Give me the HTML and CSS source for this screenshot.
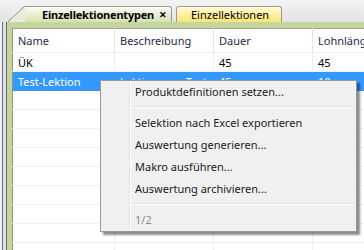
FILE: index.html
```html
<!DOCTYPE html>
<html lang="de">
<head>
    <meta charset="UTF-8">
    <meta name="viewport" content="width=device-width, initial-scale=1.0">
    <title>Einzellektionentypen</title>
    <link rel="stylesheet" href="styles.css">
</head>
<body>
    <div id="window">
        <div id="tabstrip">
            <div class="tab tab-active">
                <span class="tab-label">Einzellektionentypen</span>
                <span class="tab-close">&#x2715;</span>
            </div>
            <div class="tab tab-yellow">
                <span class="tab-label">Einzellektionen</span>
            </div>
        </div>
        <div id="body">
            <div id="chrome-left"></div>
            <div id="frame">
                <table id="grid">
                    <colgroup>
                        <col class="col-name">
                        <col class="col-desc">
                        <col class="col-dauer">
                        <col class="col-lohn">
                    </colgroup>
                    <thead>
                        <tr>
                            <th>Name</th>
                            <th>Beschreibung</th>
                            <th>Dauer</th>
                            <th>Lohnlänge</th>
                        </tr>
                    </thead>
                    <tbody>
                        <tr>
                            <td>ÜK</td>
                            <td></td>
                            <td>45</td>
                            <td>45</td>
                        </tr>
                        <tr class="selected">
                            <td>Test-Lektion</td>
                            <td>Lektion zum Test</td>
                            <td>45</td>
                            <td>10</td>
                        </tr>
                        <tr><td></td><td></td><td></td><td></td></tr>
                        <tr><td></td><td></td><td></td><td></td></tr>
                        <tr><td></td><td></td><td></td><td></td></tr>
                        <tr><td></td><td></td><td></td><td></td></tr>
                        <tr><td></td><td></td><td></td><td></td></tr>
                        <tr><td></td><td></td><td></td><td></td></tr>
                        <tr><td></td><td></td><td></td><td></td></tr>
                        <tr><td></td><td></td><td></td><td></td></tr>
                        <tr><td></td><td></td><td></td><td></td></tr>
                        <tr><td></td><td></td><td></td><td></td></tr>
                    </tbody>
                </table>
            </div>
        </div>

        <!-- context menu over the grid -->
        <div id="menu">
            <div class="menu-item">Produktdefinitionen setzen...</div>
            <div class="menu-sep"></div>
            <div class="menu-item">Selektion nach Excel exportieren</div>
            <div class="menu-item">Auswertung generieren...</div>
            <div class="menu-item">Makro ausführen...</div>
            <div class="menu-item">Auswertung archivieren...</div>
            <div class="menu-sep"></div>
            <div class="menu-item disabled">1/2</div>
        </div>
    </div>
</body>
</html>
```

FILE: styles.css
```css
body {
    margin: 0;
    padding: 0;
    font-family: 'Noto Sans', 'Open Sans', sans-serif;
    font-size: 11px;
    background-color: #ececec;
}

#window {
    position: relative;
    width: 364px;
    height: 250px;
    overflow: hidden;
}

#tabstrip {
    display: flex;
    align-items: flex-end;
    height: 22px;
    padding-left: 25px;
    background: linear-gradient(#f3f3f3, #e3e3e3);
}

.tab {
    position: relative;
    display: flex;
    align-items: center;
    box-sizing: border-box;
    height: 16px;
    border: 1px solid #9a9a9a;
    border-bottom: none;
    border-radius: 0 3px 0 0;
    color: #000;
}

.tab-active {
    width: 147px;
    padding-left: 17px;
    background: linear-gradient(#fafcf5, #d3e2b3);
    border-left: none;
}

.tab-active::before {
    content: '';
    position: absolute;
    left: -17px;
    top: -1px;
    width: 17px;
    height: 16px;
    background: linear-gradient(to top left, #e6eedb calc(50% - 0.5px), #8e8e8e 50%, transparent calc(50% + 1px));
}

.tab-active .tab-label {
    font-weight: bold;
    letter-spacing: -0.2px;
}

.tab-close {
    margin-left: auto;
    margin-right: 4px;
    font-size: 9px;
    font-weight: bold;
}

.tab-yellow {
    width: 106px;
    margin-left: 4px;
    padding-left: 14px;
    background: linear-gradient(#fffbd6, #fbe571);
    border-radius: 3px 3px 0 0;
}

#body {
    display: flex;
    height: 228px;
}

#chrome-left {
    width: 4px;
    flex: none;
    background-color: #dcdfe8;
    border-left: 2px solid #eef0f4;
    box-shadow: inset 1px 0 0 #6e6e6e, inset -1px 0 0 #6a6a6a;
    padding-left: 1px;
}

#frame {
    flex: 1;
    border-top: 6px solid #c4d69e;
    border-left: 5px solid #c4d69e;
    overflow: hidden;
    background-color: #fff;
}

#grid {
    border-collapse: collapse;
    table-layout: fixed;
    width: 400px;
    border-top: 1px solid #9aa38a;
    border-left: 1px solid #8e9684;
    color: #000;
}

.col-name { width: 102px; }
.col-desc { width: 99px; }
.col-dauer { width: 99px; }
.col-lohn { width: 99px; }

#grid th {
    height: 23px;
    padding: 0 0 0 5px;
    text-align: left;
    font-weight: normal;
    color: #1e2a4a;
    border-right: 1px solid #e4e4e4;
    white-space: nowrap;
    overflow: hidden;
}

#grid td {
    height: 18px;
    padding: 0 0 0 5px;
    border-right: 1px solid #f0f0f0;
    border-bottom: 1px solid #f0f0f0;
    white-space: nowrap;
    overflow: hidden;
}

#grid tbody tr:first-child td {
    border-top: 1px solid #f0f0f0;
}

#grid tr.selected td {
    background-color: #3399ff;
    color: #fff;
    border-color: #3399ff;
}

#menu {
    position: absolute;
    left: 100px;
    top: 80px;
    width: 255px;
    border: 1px solid #979797;
    background-color: #f0f0f0;
    box-shadow: 3px 3px 2px rgba(0, 0, 0, 0.45);
    background-image: linear-gradient(to right, transparent 28px, #e2e3e3 28px, #e2e3e3 29px, #fff 29px, #fff 30px, transparent 30px);
}

.menu-item {
    height: 22px;
    line-height: 22px;
    padding-left: 34px;
    color: #1b1b1b;
    white-space: nowrap;
}

.menu-item.disabled {
    color: #8a8a8a;
}

.menu-sep {
    height: 9px;
    margin-left: 30px;
    margin-right: 2px;
    background: linear-gradient(transparent 3px, #e0e0e0 3px, #e0e0e0 4px, #fff 4px, #fff 5px, transparent 5px);
}
```
